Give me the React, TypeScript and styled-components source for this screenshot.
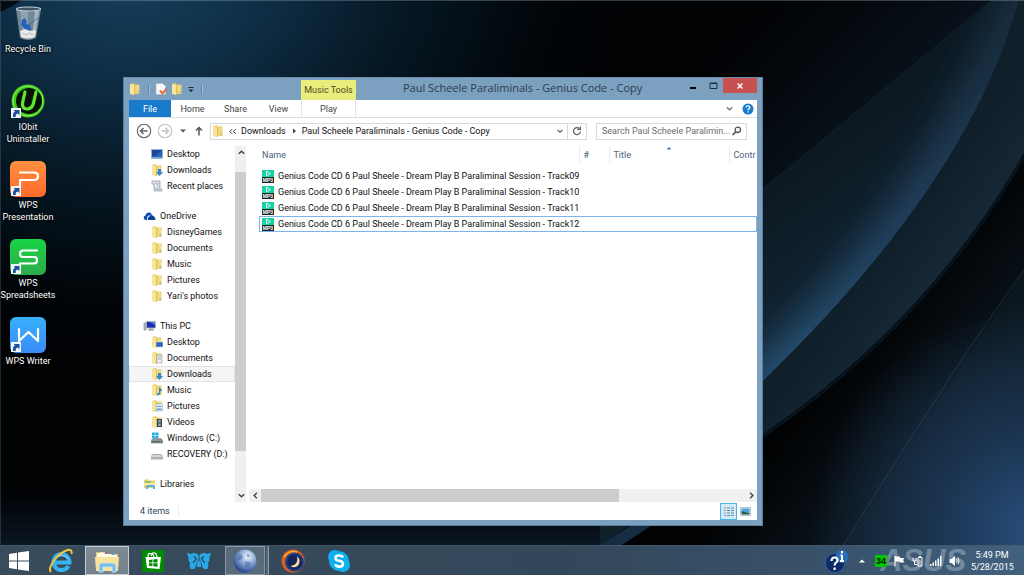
import React from "react";
import styled, { createGlobalStyle, css } from "styled-components";

const Global = createGlobalStyle`
  * { box-sizing: border-box; }
  body { margin: 0; background: #000; }
  body, button, input, table { font-family: Roboto, "Open Sans", sans-serif; font-size: 9px; line-height: 12px; }
  button { border: 0; padding: 0; background: none; color: inherit; cursor: pointer; }
  a { color: inherit; text-decoration: none; }
  svg { display: block; flex: none; }
  ul { list-style: none; margin: 0; padding: 0; }
`;

const Screen = styled.div`
  position: relative;
  min-height: 100vh;
  display: flex;
  flex-direction: column;
  overflow: hidden;
  background: #02060a;
`;
const WallpaperSvg = styled.svg`
  position: absolute;
  inset: 0;
  width: 100%;
  height: 100%;
`;
const Desktop = styled.main`
  position: relative;
  flex: 1;
  border-top: 1px solid rgba(170, 190, 200, 0.3);
  border-left: 1px solid rgba(170, 190, 200, 0.18);
`;

/* Desktop shortcuts */
const Shortcuts = styled.ul`
  width: 54px;
  padding-top: 4px;
`;
const Shortcut = styled.a`
  display: flex;
  flex-direction: column;
  align-items: center;
  gap: 2px;
  height: 78px;
  color: #fff;
  text-align: center;
  text-shadow: 0 1px 2px #000, 0 0 2px #000;
`;

/* Explorer window */
const Window = styled.section`
  position: absolute;
  top: 76px;
  left: 122px;
  right: 261px;
  bottom: 19px;
  display: flex;
  flex-direction: column;
  padding: 0 5px 5px;
  background: #7ba0c0;
  border: 1px solid #5c7d99;
  border-top-color: #6b8cab;
`;
const TitleBar = styled.header`
  display: flex;
  height: 22px;
  flex: none;
`;
const QuickAccess = styled.div`
  display: flex;
  align-items: center;
  gap: 4px;
  width: 172px;
`;
const QuickSeparator = styled.span<{ $last?: boolean }>`
  width: 1px;
  height: 9px;
  margin-left: ${(p) => (p.$last ? 2 : 3)}px;
  margin-right: 2px;
  background: #5f83a3;
  box-shadow: 1px 0 #a3bdd3;
`;
const ContextTab = styled.div`
  width: 55px;
  margin-top: 2px;
  line-height: 20px;
  text-align: center;
  background: #e9ed7b;
  color: #4b4b23;
`;
const Title = styled.h1`
  flex: 1;
  margin: 0;
  padding-left: 47px;
  font-family: "Open Sans", sans-serif;
  font-size: 11px;
  line-height: 20px;
  font-weight: 400;
  color: #2c3e50;
  white-space: nowrap;
  overflow: hidden;
`;
const WindowButton = styled.button<{ $close?: boolean }>`
  width: ${(p) => (p.$close ? 34 : 20)}px;
  height: 15px;
  display: flex;
  align-items: center;
  justify-content: center;
  ${(p) => p.$close && css`background: #c75050; color: #fff;`}
`;
const Client = styled.div`
  flex: 1;
  min-height: 0;
  display: flex;
  flex-direction: column;
  background: #fff;
  color: #111;
`;
const Ribbon = styled.nav`
  display: flex;
  height: 18px;
  flex: none;
  border-bottom: 1px solid #dcdddf;
  color: #444;
`;
const RibbonTab = styled.button<{ $file?: boolean; $context?: boolean }>`
  width: 43px;
  line-height: 18px;
  text-align: center;
  ${(p) => p.$file && css`width: 42px; background: #1979ca; color: #fff;`}
  ${(p) =>
    p.$context &&
    css`
      width: 55px;
      margin-left: 1px;
      border: solid #e4e5e6;
      border-width: 0 1px;
    `}
`;
const RibbonEnd = styled.div`
  margin-left: auto;
  display: flex;
  align-items: center;
  gap: 8px;
  padding-right: 3px;
  color: #777;
`;
const AddressRow = styled.div`
  display: flex;
  align-items: center;
  height: 28px;
  flex: none;
  padding: 0 10px 2px 7px;
`;
const NavButton = styled.button<{ $w: number }>`
  width: ${(p) => p.$w}px;
  height: 16px;
  display: flex;
  align-items: center;
  justify-content: center;
  color: #555;
`;
const Box = styled.div`
  display: flex;
  align-items: center;
  height: 17px;
  border: 1px solid #d9d9d9;
  background: #fff;
`;
const AddressBox = styled(Box)`
  flex: 1;
  padding-left: 1px;
  gap: 4px;
  white-space: nowrap;
  min-width: 0;
`;
const AddressEnd = styled.div`
  margin-left: auto;
  display: flex;
  align-self: stretch;
`;
const BoxButton = styled.button<{ $divided?: boolean }>`
  width: ${(p) => (p.$divided ? 19 : 14)}px;
  display: flex;
  align-items: center;
  justify-content: center;
  color: #555;
  ${(p) => p.$divided && css`border-left: 1px solid #d9d9d9;`}
`;
const SearchBox = styled(Box)`
  width: 151px;
  margin-left: 9px;
  padding: 0 4px 0 5px;
`;
const SearchInput = styled.input`
  flex: 1;
  min-width: 0;
  border: 0;
  padding: 0;
  outline: 0;
  background: none;
  color: #6d6d6d;
  text-overflow: ellipsis;
  &::placeholder { color: #6d6d6d; opacity: 1; }
`;
const Panes = styled.div`
  flex: 1;
  min-height: 0;
  display: flex;
`;
const NavPane = styled.nav`
  width: 106px;
  overflow: hidden;
  display: flex;
  flex-direction: column;
  gap: 14px;
`;
const NavItem = styled.a<{ $root?: boolean; $selected?: boolean }>`
  display: flex;
  align-items: center;
  gap: 4px;
  height: 16px;
  padding-left: ${(p) => (p.$root ? 14 : 22)}px;
  white-space: nowrap;
  ${(p) => p.$selected && css`background: #f5f5f5; box-shadow: inset 0 0 0 1px #e3e3e3;`}
`;
const VScroll = styled.div`
  width: 11px;
  display: flex;
  flex-direction: column;
  background: #f0f0f0;
`;
const HScroll = styled.div`
  height: 13px;
  flex: none;
  display: flex;
  margin-left: 3px;
  background: #f0f0f0;
`;
const ScrollArrow = styled.button`
  width: 12px;
  height: 13px;
  flex: none;
  display: flex;
  align-items: center;
  justify-content: center;
  color: #444;
`;
const VThumb = styled.div`
  margin-top: 13px;
  flex: 0 1 279px;
  background: #cdcdcd;
`;
const VSpace = styled.div`
  flex: 1;
`;
const HThumb = styled.div`
  width: 74%;
  background: #cdcdcd;
`;
const HTrack = styled.div`
  flex: 1;
  display: flex;
`;
const FilePane = styled.div`
  flex: 1;
  min-width: 0;
  display: flex;
  flex-direction: column;
`;
const FileArea = styled.div`
  flex: 1;
  overflow: hidden;
  padding-left: 13px;
`;
const FileTable = styled.table`
  width: 100%;
  table-layout: fixed;
  border-collapse: collapse;
  white-space: nowrap;
`;
const HeadCell = styled.th<{ $w?: number }>`
  ${(p) => p.$w && css`width: ${p.$w}px;`}
  position: relative;
  height: 18px;
  padding: 0 0 0 4px;
  text-align: left;
  font-weight: 400;
  color: #4c607a;
  overflow: hidden;
  & + & { border-left: 1px solid #e4edf5; }
  &:first-child { padding-left: 3px; }
`;
const SortMark = styled.svg`
  position: absolute;
  top: 0;
  left: 56px;
`;
const HeadGap = styled.tr`
  height: 4px;
`;
const FileRow = styled.tr<{ $focused?: boolean }>`
  height: 16px;
  ${(p) => p.$focused && css`outline: 1px solid #7eb4ea; outline-offset: -1px;`}
`;
const FileCell = styled.td`
  padding: 0 0 0 3px;
`;
const FileName = styled.span`
  display: flex;
  align-items: center;
  gap: 4px;
`;
const Status = styled.footer`
  height: 18px;
  flex: none;
  display: flex;
  align-items: center;
  padding: 0 3px 0 11px;
  color: #2c3f5c;
`;
const StatusText = styled.span`
  padding-right: 8px;
  border-right: 1px solid #ececec;
`;
const StatusEnd = styled.div`
  margin-left: auto;
  display: flex;
`;
const ViewButton = styled.button<{ $on?: boolean }>`
  width: 17px;
  height: 17px;
  display: flex;
  align-items: center;
  justify-content: center;
  ${(p) => p.$on && css`background: #cfeaf8; box-shadow: inset 0 0 0 1px #4db5e6;`}
`;

/* Taskbar */
const Taskbar = styled.footer`
  position: relative;
  display: flex;
  align-items: stretch;
  height: 30px;
  padding: 0 11px 0 0;
  color: #fff;
  background: linear-gradient(90deg, #384c5c, #33475a 55%, #38516a 80%, #41617f);
  border-top: 1px solid #45586a;
`;
const TaskButton = styled.button<{ $start?: boolean; $active?: boolean; $open?: boolean }>`
  width: ${(p) => (p.$start ? 38 : p.$open ? 40 : 44)}px;
  margin-right: ${(p) => (p.$start || p.$open ? 1 : 2)}px;
  display: flex;
  align-items: center;
  justify-content: center;
  ${(p) => p.$active && css`background: linear-gradient(#7f8b95, #74818c); box-shadow: inset 0 0 0 1px #c4ccd2;`}
  ${(p) => p.$open && css`margin-left: 2px; background: #586b7b; box-shadow: inset 0 0 0 1px #8c99a4;`}
`;
const StackedEdge = styled.span`
  width: 3px;
  margin-right: 2px;
  background: #586b7b;
  border-right: 1px solid #8c99a4;
`;
const Tray = styled.div`
  position: relative;
  margin-left: auto;
  display: flex;
  align-items: center;
  gap: 7px;
`;
const Brand = styled.span`
  position: absolute;
  left: 55px;
  top: 3px;
  font: italic 700 31px/24px "Liberation Sans", sans-serif;
  color: rgba(200, 212, 222, 0.4);
`;
const TrayButton = styled.button`
  position: relative;
  display: flex;
`;
const TempBadge = styled.span`
  position: relative;
  width: 12px;
  background: #00c800;
  color: #001a00;
  font-family: "Liberation Sans", sans-serif;
  font-weight: 700;
  text-align: center;
`;
const Clock = styled.time`
  width: 42px;
  margin-left: 4px;
  line-height: 12px;
  text-align: center;
  white-space: nowrap;
`;

/* ---------- Drawings ---------- */
const Wallpaper = () => (
  <WallpaperSvg viewBox="0 0 1024 575" preserveAspectRatio="none" aria-hidden="true">
    <defs>
      <radialGradient id="wl" gradientUnits="userSpaceOnUse" cx="130" cy="-50" r="500" gradientTransform="scale(1 .8)">
        <stop offset="0" stopColor="#194361" />
        <stop offset=".3" stopColor="#0e2d44" />
        <stop offset=".55" stopColor="#061825" />
        <stop offset=".85" stopColor="#010508" />
        <stop offset="1" stopColor="#010204" />
      </radialGradient>
      <linearGradient id="wm" x1="760" y1="60" x2="900" y2="260" gradientUnits="userSpaceOnUse">
        <stop offset="0" stopColor="#08111a" />
        <stop offset=".5" stopColor="#0d1a23" />
        <stop offset="1" stopColor="#122433" />
      </linearGradient>
      <linearGradient id="wb" x1="820" y1="340" x2="880" y2="385" gradientUnits="userSpaceOnUse">
        <stop offset="0" stopColor="#10202b" />
        <stop offset="1" stopColor="#182b3a" />
      </linearGradient>
      <linearGradient id="wd" x1="850" y1="350" x2="960" y2="440" gradientUnits="userSpaceOnUse">
        <stop offset="0" stopColor="#010203" />
        <stop offset="1" stopColor="#0d1922" />
      </linearGradient>
      <linearGradient id="wt" x1="770" y1="0" x2="880" y2="110" gradientUnits="userSpaceOnUse">
        <stop offset="0" stopColor="#010204" />
        <stop offset="1" stopColor="#08111a" />
      </linearGradient>
      <linearGradient id="wk" x1="1010" y1="20" x2="780" y2="370" gradientUnits="userSpaceOnUse">
        <stop offset="0" stopColor="#22405a" stopOpacity=".7" />
        <stop offset=".45" stopColor="#26496c" />
        <stop offset="1" stopColor="#2d618a" />
      </linearGradient>
      <radialGradient id="wr" gradientUnits="userSpaceOnUse" cx="1040" cy="535" r="230">
        <stop offset="0" stopColor="#2a5080" />
        <stop offset=".45" stopColor="#1b3450" />
        <stop offset="1" stopColor="#1b3450" stopOpacity="0" />
      </radialGradient>
      <linearGradient id="ws" x1="0" y1="490" x2="0" y2="545" gradientUnits="userSpaceOnUse">
        <stop offset="0" stopColor="#0a1622" stopOpacity="0" />
        <stop offset="1" stopColor="#0a1622" />
      </linearGradient>
      <filter id="wg" x="-30%" y="-30%" width="160%" height="160%">
        <feGaussianBlur stdDeviation="20" />
      </filter>
      <clipPath id="wc">
        <path d="M992 0 L762 190 L600 330 V545 L762 382 Q971 180 1019 0 Z" />
      </clipPath>
    </defs>
    <rect width="1024" height="575" fill="url(#wl)" />
    <path d="M0 0 H22 Q10 8 0 12 Z" fill="#030b13" />
    <rect y="490" width="700" height="85" fill="url(#ws)" />
    <path d="M660 0 H992 L762 190 L640 300 Z" fill="url(#wt)" />
    <path d="M992 0 L762 190 L600 330 V545 L762 382 Q971 180 1019 0 Z" fill="url(#wm)" />
    <g clipPath="url(#wc)">
      <path d="M1028 -30 Q975 185 766 386 L640 500" fill="none" stroke="url(#wk)" strokeWidth="36" filter="url(#wg)" />
    </g>
    <path d="M992 0 L762 190" stroke="#1f3038" strokeWidth="1" opacity=".5" />
    <path d="M1019 0 H1024 V153 Q930 320 762 435 L600 545 V530 L762 382 Q971 180 1019 0 Z" fill="url(#wb)" />
    <path d="M1024 153 V575 H560 L762 435 Q930 320 1024 153 Z" fill="url(#wd)" />
    <path d="M600 545 L640 520 H660 L622 545 Z" fill="#142d43" />
    <path d="M1024 156 Q930 323 762 437" fill="none" stroke="#07131d" strokeWidth="3" />
    <path d="M1024 270 L825 575 H1024 Z" fill="#12222d" opacity=".35" />
    <path d="M700 250 H1024 V575 H700 Z" fill="url(#wr)" />
    <path d="M1024 270 Q950 372 825 575" fill="none" stroke="#3b5363" strokeWidth="1" opacity=".45" />
  </WallpaperSvg>
);

const ShortcutArrow = () => (
  <g>
    <rect x="1" y="25" width="10" height="10" fill="#f2f5f8" />
    <path d="M3 34 Q2.500 29.500 5 28.800 L3.800 27 H9.500 V32 L7.600 30.600 Q5.200 31.500 5.800 34 Z" fill="#1d4f9c" />
  </g>
);
const BinIcon = () => (
  <svg width="36" height="36" viewBox="0 0 36 36">
    <path d="M6 4 L10 33 Q18 37 26 33 L31 4 Z" fill="#8fa3b2" opacity=".75" />
    <path d="M10 6 L13 31 H18 V6 Z" fill="#c9d6de" opacity=".35" />
    <path d="M25 6 L22 31 L25 32 L29 6 Z" fill="#dbe5eb" opacity=".5" />
    <ellipse cx="18.500" cy="4" rx="12.500" ry="2" fill="#3d5566" stroke="#c8d2d9" strokeWidth="1" />
    <path d="M12 15 L15 13 L17 17 L16 19 L20 20 L21 25 L16 26 L13 22 L11 20 Z" fill="#2461c0" />
    <path d="M19 20 L28 13" stroke="#5a7184" strokeWidth="1" />
    <path d="M10 26 L15 24 L20 26 L26 25 L25 32 Q18 35 11 32 Z" fill="#e8e8e6" />
    <path d="M13 28 l3 2 l4 -2 l3 2" stroke="#b8b8b4" fill="none" strokeWidth="1" />
  </svg>
);
const IobitIcon = () => (
  <svg width="36" height="36" viewBox="0 0 36 36">
    <circle cx="18" cy="18" r="16.500" fill="#3ec81e" />
    <circle cx="18" cy="18" r="15" fill="none" stroke="#8df25a" strokeWidth="1" />
    <circle cx="19" cy="18" r="13" fill="#071207" />
    <path d="M15 9 L12.500 20 Q12 26 17 26 Q22 26 23.500 20 L26 9" fill="none" stroke="#62e636" strokeWidth="3.200" strokeLinecap="round" />
    <ShortcutArrow />
  </svg>
);
const WpsIcon = ({ id, from, to, d }: { id: string; from: string; to: string; d: string }) => (
  <svg width="36" height="36" viewBox="0 0 36 36">
    <defs>
      <linearGradient id={id} x1="0" y1="0" x2="0" y2="1">
        <stop offset="0" stopColor={from} />
        <stop offset="1" stopColor={to} />
      </linearGradient>
    </defs>
    <rect width="36" height="36" rx="6" fill={`url(#${id})`} />
    <path d={d} fill="none" stroke="#fff" strokeWidth="2.200" strokeLinecap="round" strokeLinejoin="round" />
    <ShortcutArrow />
  </svg>
);

const Folder = ({ children }: { children?: React.ReactNode }) => (
  <svg width="12" height="12" viewBox="0 0 12 12">
    <path d="M1 1 L5 0 L5.500 1.500 H10.500 V11 H1 Z" fill="#e8cb68" />
    <path d="M1 1 L5 2 V12 L1 11 Z" fill="#f9e59a" />
    <path d="M5 2 H5.800 V12 L5 12 Z" fill="#dcbc58" />
    <path d="M6.500 2.500 H10 V10.500 H6.500 Z" fill="#f1da84" />
    <path d="M8.500 8 h1.500 v2 h-1.500 z" fill="#a9c3a8" />
    {children}
  </svg>
);
const DownArrowMark = () => <path d="M7 5 H10 V8 H12 L8.500 12 L5 8 H7 Z" fill="#2f87d6" />;
const Monitor = () => (
  <svg width="12" height="12" viewBox="0 0 12 12">
    <rect x="0.500" y="1.500" width="11" height="9" fill="#2a62b8" stroke="#8fb2d8" strokeWidth=".6" />
    <path d="M1 2 H11 L4 8 H1 Z" fill="#1c459c" />
    <path d="M1 9 H11 V10 H1 Z" fill="#74a6dd" />
  </svg>
);
const Recent = () => (
  <svg width="12" height="12" viewBox="0 0 12 12">
    <path d="M1 1 H9 V9 H11 V11 H3 V4 H1 Z" fill="#dfe5e9" stroke="#9aa5ac" strokeWidth=".8" />
    <circle cx="6" cy="5.500" r="2.600" fill="#fff" stroke="#8da3b5" strokeWidth=".8" />
    <path d="M6 4 V5.500 H7.500" stroke="#5a7390" strokeWidth=".7" fill="none" />
    <path d="M4 9.700 H9" stroke="#9aa5ac" strokeWidth=".8" />
  </svg>
);
const Cloud = () => (
  <svg width="13" height="12" viewBox="0 0 13 12">
    <path d="M1 8.500 Q0 6 2.500 5.500 Q3 2.500 6 2.500 Q8 2.500 9 4.500 L5 6 Q3.500 7 4 10 H2.500 Q1.500 10 1 8.500 Z" fill="#0f4fae" />
    <path d="M5 10 Q4 7 6.500 6.500 Q8 4 10 5.800 Q11.500 6 11.500 7.500 Q13 8 12.500 9.300 Q12 10 11 10 Z" fill="#0a3f98" />
  </svg>
);
const Computer = () => (
  <svg width="13" height="12" viewBox="0 0 13 12">
    <path d="M1 3 H3 V10 H1 Z" fill="#b8c0c6" stroke="#6f7c86" strokeWidth=".6" />
    <rect x="3.500" y="1.500" width="9" height="6.500" fill="#1b2fae" stroke="#a9b8c4" strokeWidth=".8" />
    <path d="M7 2 H12 V5 Z" fill="#5c79dd" />
    <path d="M6 8.500 H10 V9.500 H11 V10.500 H5 V9.500 H6 Z" fill="#8e9ba5" />
  </svg>
);
const Drive = ({ win }: { win?: boolean }) => (
  <svg width="12" height="12" viewBox="0 0 12 12">
    {win && <path d="M1 0.500 H3.800 V3 H1 Z M4.300 0.500 H7.500 V3 H4.300 Z M1 3.500 H3.800 V6 H1 Z M4.300 3.500 H7.500 V6 H4.300 Z" fill="#1fb0e6" />}
    <path d="M2 6.500 H10 L12 8.500 V11 H0 V8.500 Z" fill={win ? "#8b949b" : "#d4d7da"} stroke="#767d83" strokeWidth=".6" />
    <path d="M1 9 H11 V10.500 H1 Z" fill={win ? "#5d666d" : "#a9adb0"} />
    <path d="M8.500 9.300 h1.800 v.8 h-1.800 z" fill="#5fd25f" />
  </svg>
);
const Library = () => (
  <svg width="13" height="12" viewBox="0 0 13 12">
    <path d="M1 2 L5 1 L6 2.500 H12 V10 H1 Z" fill="#edcf6b" />
    <path d="M2 3 H8 V5 H2 Z" fill="#8cc878" />
    <path d="M1 5 H12 V7 H1 Z" fill="#fbeaa6" />
    <path d="M3 11 V8.500 Q3 7 5 7 H10 Q12 7 12 8.500 V11 H10 V9 H5 V11 Z" fill="#58aee0" />
  </svg>
);
const Mp3 = () => (
  <svg width="12" height="13" viewBox="0 0 12 13">
    <rect width="12" height="7" fill="#19cfa4" />
    <path d="M4.500 1.200 L8.500 3.500 L4.500 6 Z" fill="none" stroke="#d8fff4" strokeWidth="1" />
    <rect y="7" width="12" height="6" fill="#1d2422" />
    <text x="6" y="12" fontSize="5" fontWeight="700" textAnchor="middle" fill="#fff" fontFamily="Liberation Sans, sans-serif">MP3</text>
  </svg>
);
const Stroke = ({ d, w = 10, s = 1.5 }: { d: string; w?: number; s?: number }) => (
  <svg width={w} height={w} viewBox="0 0 10 10" fill="none" stroke="currentColor" strokeWidth={s}>
    <path d={d} />
  </svg>
);
const CircleArrow = ({ flip, color }: { flip?: boolean; color: string }) => (
  <svg width="16" height="16" viewBox="0 0 16 16" fill="none" stroke={color}>
    <circle cx="8" cy="8" r="6.700" strokeWidth="1.100" />
    <path d={flip ? "M4.500 8 H11.500 M8.500 5 L11.500 8 L8.500 11" : "M11.500 8 H4.500 M7.500 5 L4.500 8 L7.500 11"} strokeWidth="1.500" />
  </svg>
);

const quickAccess = [{ name: "Properties" }, { name: "New folder" }];

const navGroups = [
  [
    { label: "Desktop", icon: <Monitor /> },
    { label: "Downloads", icon: <Folder><DownArrowMark /></Folder> },
    { label: "Recent places", icon: <Recent /> },
  ],
  [
    { label: "OneDrive", icon: <Cloud />, root: true },
    ...["DisneyGames", "Documents", "Music", "Pictures", "Yari's photos"].map((label) => ({ label, icon: <Folder /> })),
  ],
  [
    { label: "This PC", icon: <Computer />, root: true },
    { label: "Desktop", icon: <Folder><path d="M5 6 H12 V11 H5 Z" fill="#2d66c0" stroke="#cfdcec" strokeWidth=".5" /></Folder> },
    { label: "Documents", icon: <Folder><path d="M6 3 H11 V11 H6 Z" fill="#eef1f4" stroke="#8d99a5" strokeWidth=".6" /><path d="M7 5 H10 M7 7 H10" stroke="#7f93ab" strokeWidth=".7" /></Folder> },
    { label: "Downloads", icon: <Folder><DownArrowMark /></Folder>, selected: true },
    { label: "Music", icon: <Folder><path d="M8 3 L11 6 L10 8 L9 6.500 V10 Q8 12 6 11 Q5.500 9 8 9 Z" fill="#2987d4" /></Folder> },
    { label: "Pictures", icon: <Folder><path d="M5 4 H11.500 V11 H5 Z" fill="#eaf4fa" stroke="#8ea4b2" strokeWidth=".6" /><path d="M6 6 H10.500 V7 H6 Z M6 8.500 H10.500 V10 H6 Z" fill="#4f9ec4" /></Folder> },
    { label: "Videos", icon: <Folder><path d="M6 3 H11 V11 H6 Z" fill="#3c4348" /><path d="M7.300 4 H9.700 V6.500 H7.300 Z M7.300 7.500 H9.700 V10 H7.300 Z" fill="#7db2cf" /></Folder> },
    { label: "Windows (C:)", icon: <Drive win /> },
    { label: "RECOVERY (D:)", icon: <Drive /> },
  ],
  [{ label: "Libraries", icon: <Library />, root: true }],
] as { label: string; icon: React.ReactNode; root?: boolean; selected?: boolean }[][];

const tracks = ["09", "10", "11", "12"];

const shortcuts = [
  { label: "Recycle Bin", icon: <BinIcon /> },
  { label: "IObit Uninstaller", icon: <IobitIcon /> },
  { label: "WPS Presentation", icon: <WpsIcon id="wp" from="#ff9040" to="#ff6a2c" d="M10 11.500 H24 Q28 11.500 28 15.300 Q28 19 24 19 H10 V27" /> },
  { label: "WPS Spreadsheets", icon: <WpsIcon id="wsh" from="#19d443" to="#2cab4c" d="M27 11.500 H13 Q10 11.500 10 15 Q10 18 13 18 H24 Q27 18 27 21 Q27 24.500 24 24.500 H10" /> },
  { label: "WPS Writer", icon: <WpsIcon id="ww" from="#36b0fb" to="#3b8cf6" d="M9 12 V24 L18.500 15 L28 24 V12" /> },
];

export default function App() {
  return (
    <>
      <Global />
      <Screen>
        <Wallpaper />
        <Desktop>
          <Shortcuts>
            {shortcuts.map((s) => (
              <li key={s.label}>
                <Shortcut href="#">
                  {s.icon}
                  {s.label}
                </Shortcut>
              </li>
            ))}
          </Shortcuts>

          <Window>
            <TitleBar>
              <QuickAccess>
                <Folder />
                <QuickSeparator />
                {quickAccess.map((q, i) => (
                  <button key={q.name} aria-label={q.name}>
                    {i === 0 ? (
                      <svg width="12" height="12" viewBox="0 0 12 12">
                        <path d="M1 0.500 H7.500 L10.500 3 V11.500 H1 Z" fill="#f7f9fb" stroke="#a4b3c0" strokeWidth=".6" />
                        <path d="M5 7.500 L7.500 10.500 L11.500 5.500" fill="none" stroke="#e2693c" strokeWidth="2" />
                      </svg>
                    ) : (
                      <Folder />
                    )}
                  </button>
                ))}
                <button aria-label="Customize Quick Access Toolbar">
                  <svg width="8" height="8" viewBox="0 0 8 8" fill="#1d2a36">
                    <path d="M1.500 2 H6.500 V3 H1.500 Z M1.500 4.500 H6.500 L4 7 Z" />
                  </svg>
                </button>
                <QuickSeparator $last />
              </QuickAccess>
              <ContextTab>Music Tools</ContextTab>
              <Title>Paul Scheele Paraliminals - Genius Code - Copy</Title>
              <WindowButton aria-label="Minimize">
                <Stroke d="M2 7 H8" s={2} />
              </WindowButton>
              <WindowButton aria-label="Maximize">
                <svg width="9" height="9" viewBox="0 0 9 9" fill="none" stroke="#22303c">
                  <path d="M1 2 H8 V7.500 H1 Z M1 2.500 H8" />
                </svg>
              </WindowButton>
              <WindowButton $close aria-label="Close">
                <Stroke d="M2 2 L8 8 M8 2 L2 8" w={8} s={1.8} />
              </WindowButton>
            </TitleBar>

            <Client>
              <Ribbon>
                <RibbonTab $file>File</RibbonTab>
                <RibbonTab>Home</RibbonTab>
                <RibbonTab>Share</RibbonTab>
                <RibbonTab>View</RibbonTab>
                <RibbonTab $context>Play</RibbonTab>
                <RibbonEnd>
                  <button aria-label="Expand the Ribbon">
                    <Stroke d="M2 3.500 L5 6.500 L8 3.500" w={9} />
                  </button>
                  <button aria-label="Help">
                    <svg width="12" height="12" viewBox="0 0 12 12">
                      <circle cx="6" cy="6" r="5.500" fill="#1979ca" />
                      <path d="M4 4.500 Q4.200 2.800 6 2.800 Q7.900 2.800 7.900 4.400 Q7.900 5.300 6.800 5.900 Q6 6.400 6 7.300 M6 8.300 V9.600" fill="none" stroke="#fff" strokeWidth="1.300" />
                    </svg>
                  </button>
                </RibbonEnd>
              </Ribbon>

              <AddressRow>
                <NavButton $w={16} aria-label="Back"><CircleArrow color="#666" /></NavButton>
                <NavButton $w={26} aria-label="Forward"><CircleArrow flip color="#c2c2c2" /></NavButton>
                <NavButton $w={10} aria-label="Recent locations">
                  <svg width="6" height="4" viewBox="0 0 6 4" fill="#555"><path d="M0 0.500 H6 L3 3.500 Z" /></svg>
                </NavButton>
                <NavButton $w={22} aria-label="Up"><Stroke d="M5 9.500 V1.500 M2 4.500 L5 1.500 L8 4.500" /></NavButton>
                <AddressBox>
                  <Folder />
                  <Stroke d="M4.500 2.500 L2 5 L4.500 7.500 M8.500 2.500 L6 5 L8.500 7.500" w={9} s={1} />
                  <a href="#">Downloads</a>
                  <svg width="8" height="6" viewBox="0 0 8 6" fill="#444"><path d="M3 0.500 L6 3 L3 5.500 Z" /></svg>
                  <a href="#">Paul Scheele Paraliminals - Genius Code - Copy</a>
                  <AddressEnd>
                    <BoxButton aria-label="Previous locations"><Stroke d="M2 3.500 L5 6.500 L8 3.500" w={8} /></BoxButton>
                    <BoxButton $divided aria-label="Refresh">
                      <svg width="10" height="10" viewBox="0 0 10 10" fill="none" stroke="#666" strokeWidth="1.300">
                        <path d="M7.500 2.600 A3.500 3.500 0 1 0 8.500 5.500" />
                        <path d="M5.200 3.400 H8.300 V0.500" />
                      </svg>
                    </BoxButton>
                  </AddressEnd>
                </AddressBox>
                <SearchBox>
                  <SearchInput aria-label="Search" placeholder="Search Paul Scheele Paralimin..." />
                  <svg width="11" height="10" viewBox="0 0 11 10" fill="none" stroke="#555" strokeWidth="1.300">
                    <circle cx="6.800" cy="3.800" r="2.700" />
                    <path d="M4.800 5.800 L1.500 9" strokeWidth="1.700" />
                  </svg>
                </SearchBox>
              </AddressRow>

              <Panes>
                <NavPane>
                  {navGroups.map((group, i) => (
                    <ul key={i}>
                      {group.map((n) => (
                        <li key={n.label}>
                          <NavItem href="#" $root={n.root} $selected={n.selected}>
                            {n.icon}
                            {n.label}
                          </NavItem>
                        </li>
                      ))}
                    </ul>
                  ))}
                </NavPane>
                <VScroll>
                  <ScrollArrow aria-label="Scroll up"><Stroke d="M2 6.500 L5 3.500 L8 6.500" w={9} s={1.6} /></ScrollArrow>
                  <VThumb />
                  <VSpace />
                  <ScrollArrow aria-label="Scroll down"><Stroke d="M2 3.500 L5 6.500 L8 3.500" w={9} s={1.6} /></ScrollArrow>
                </VScroll>
                <FilePane>
                  <FileArea>
                    <FileTable>
                      <thead>
                        <tr>
                          <HeadCell $w={320}>Name</HeadCell>
                          <HeadCell $w={30}>#</HeadCell>
                          <HeadCell $w={120}>
                            Title
                            <SortMark width="6" height="4" viewBox="0 0 6 4" fill="#4a80a8"><path d="M0.500 3.500 L3 1 L5.500 3.500 Z" /></SortMark>
                          </HeadCell>
                          <HeadCell>Contr</HeadCell>
                        </tr>
                      </thead>
                      <tbody>
                        <HeadGap aria-hidden="true" />
                        {tracks.map((t) => (
                          <FileRow key={t} $focused={t === "12"}>
                            <FileCell>
                              <FileName>
                                <Mp3 />
                                Genius Code CD 6 Paul Sheele - Dream Play B Paraliminal Session - Track{t}
                              </FileName>
                            </FileCell>
                            <FileCell />
                            <FileCell />
                            <FileCell />
                          </FileRow>
                        ))}
                      </tbody>
                    </FileTable>
                  </FileArea>
                  <HScroll>
                    <ScrollArrow aria-label="Scroll left"><Stroke d="M6.500 2 L3.500 5 L6.500 8" w={9} s={1.6} /></ScrollArrow>
                    <HTrack><HThumb /></HTrack>
                    <ScrollArrow aria-label="Scroll right"><Stroke d="M3.500 2 L6.500 5 L3.500 8" w={9} s={1.6} /></ScrollArrow>
                  </HScroll>
                </FilePane>
              </Panes>

              <Status>
                <StatusText>4 items</StatusText>
                <StatusEnd>
                  <ViewButton $on aria-label="Details view">
                    <svg width="12" height="11" viewBox="0 0 12 11" fill="none" stroke="#5d7f95">
                      <path d="M4 2 H7 M8 2 H11 M4 4.500 H7 M8 4.500 H11 M4 7 H7 M8 7 H11 M4 9.500 H7 M8 9.500 H11" strokeWidth=".9" />
                      <path d="M1 2 H3 M1 4.500 H3 M1 7 H3 M1 9.500 H3" stroke="#b98a8a" />
                    </svg>
                  </ViewButton>
                  <ViewButton aria-label="Thumbnail view">
                    <svg width="11" height="9" viewBox="0 0 11 9">
                      <rect x=".5" y=".5" width="10" height="8" fill="#eaf4fb" stroke="#b4c0c9" />
                      <path d="M1.500 1.500 H9.500 V5 H1.500 Z" fill="#4aa3dc" />
                      <path d="M1.500 7.500 V4 L4 5 L9.500 5.500 V7.500 Z" fill="#1e5a50" />
                    </svg>
                  </ViewButton>
                </StatusEnd>
              </Status>
            </Client>
          </Window>
        </Desktop>

        <Taskbar>
          <TaskButton $start aria-label="Start">
            <svg width="22" height="20" viewBox="0 0 22 20" fill="#fff">
              <path d="M1 3 L9 1.800 V9.500 H1 Z M10 1.600 L21 0 V9.500 H10 Z M1 10.500 H9 V18.200 L1 17 Z M10 10.500 H21 V20 L10 18.400 Z" />
            </svg>
          </TaskButton>
          <TaskButton aria-label="Internet Explorer">
            <svg width="26" height="26" viewBox="0 0 26 26" fill="none">
              <path d="M20.500 18 A8 8 0 1 1 21.500 14.500 H7" stroke="#35b4ee" strokeWidth="4" />
              <path d="M7 10.500 Q13 5 20 10" stroke="#9adff8" strokeWidth="1" />
              <path d="M3 24 Q0 21 6 12.500 Q12 4.500 19.500 2 Q24.500 1 23.500 6" stroke="#f5c43a" strokeWidth="2" />
            </svg>
          </TaskButton>
          <TaskButton $active aria-label="File Explorer">
            <svg width="26" height="24" viewBox="0 0 26 24">
              <path d="M2 3 H9 L10 5 H24 V21 H2 Z" fill="#e9c968" />
              <path d="M4 2 H6 V4 H4 Z" fill="#49b04d" />
              <path d="M10 3 H12 V5 H10 Z" fill="#d8563e" />
              <path d="M18 4 H20 V6 H18 Z" fill="#5299dd" />
              <path d="M5 3.500 H11 V5 H17 V6 H23 V8 H3 V5 Z" fill="#fffbe9" />
              <path d="M1 8 H25 L24 22 H2 Z" fill="#f8e39a" />
              <path d="M5 23 V17 Q5 14 8 14 H18 Q22 14 22 17 V23 H18 V18 H9 V23 Z" fill="#78bde8" stroke="#c9e6f7" strokeWidth=".8" />
            </svg>
          </TaskButton>
          <TaskButton aria-label="Store">
            <svg width="22" height="22" viewBox="0 0 22 22">
              <rect width="22" height="22" fill="#008a00" />
              <path d="M3.500 7 H19 L17.500 19 L5 18 Z" fill="#fff" />
              <path d="M6 8 Q5.500 3 8.500 3.500 Q12 4 12 8 M9 6 Q10 2 13 3 Q15 4 15 8" fill="none" stroke="#fff" strokeWidth="1.200" />
              <path d="M7 10 L10.500 9.600 V12.500 H7 Z M11.300 9.500 L15.500 9 V12.500 H11.300 Z M7 13.300 H10.500 V16.200 L7 15.800 Z M11.300 13.300 H15.500 V16.800 L11.300 16.300 Z" fill="#008a00" />
            </svg>
          </TaskButton>
          <TaskButton aria-label="Twin bears">
            <svg width="26" height="20" viewBox="0 0 26 20" fill="#27a9e8">
              <path d="M1 3 Q2 1 4 3 L8 2 Q11 2 12.500 4 V8 L10 13 Q10 17 8 18 H4.500 Q3 15 4 12 Q1.500 9 2.500 6 Z" />
              <path d="M25 3 Q24 1 22 3 L18 2 Q15 2 13.500 4 V8 L16 13 Q16 17 18 18 H21.500 Q23 15 22 12 Q24.500 9 23.500 6 Z" />
              <path d="M11 12 L13 9 L15 12 V16 H11 Z" />
              <path d="M8 5.500 L10.500 7.500 L7 12 M18 5.500 L15.500 7.500 L19 12" fill="none" stroke="#24394a" strokeWidth="1.100" />
            </svg>
          </TaskButton>
          <TaskButton $open aria-label="Moon browser">
            <svg width="24" height="24" viewBox="0 0 24 24">
              <defs>
                <radialGradient id="moon" cx=".62" cy=".3" r=".75">
                  <stop offset="0" stopColor="#f0f6fc" />
                  <stop offset=".45" stopColor="#8aa9d6" />
                  <stop offset="1" stopColor="#1c3c84" />
                </radialGradient>
              </defs>
              <circle cx="12" cy="12" r="11.500" fill="url(#moon)" />
              <path d="M5 6 Q9 4 10 8 Q8 12 4 11 Z M12 13 Q17 11 18 15 Q15 20 12 18 Z M14 5 Q17 5 17 8 L14 8 Z" fill="#49699f" opacity=".55" />
            </svg>
          </TaskButton>
          <StackedEdge />
          <TaskButton aria-label="Eclipse browser">
            <svg width="24" height="24" viewBox="0 0 24 24">
              <circle cx="12" cy="12" r="11.500" fill="#d9601a" />
              <path d="M3 8 Q8 1 16 3" fill="none" stroke="#ffae42" strokeWidth="1.500" />
              <circle cx="13.500" cy="13" r="9.500" fill="#1f3f86" />
              <circle cx="13.500" cy="13" r="7.500" fill="#12265a" />
              <path d="M16 7 Q21 12 16.500 17 Q13 19.500 9.500 17 Q18 16 16 7 Z" fill="#ffd9a0" />
            </svg>
          </TaskButton>
          <TaskButton aria-label="Skype">
            <svg width="24" height="24" viewBox="0 0 24 24">
              <circle cx="8" cy="8" r="7" fill="#0cb0ee" />
              <circle cx="16" cy="16" r="7" fill="#0cb0ee" />
              <circle cx="12" cy="12" r="10" fill="#0cb0ee" />
              <path d="M16 8.500 Q15 6.500 12 6.500 Q8.500 6.500 8.500 9 Q8.500 11.200 12 11.800 Q16 12.500 16 15 Q16 17.600 12 17.600 Q9 17.600 8 15.300" fill="none" stroke="#fff" strokeWidth="2.600" />
            </svg>
          </TaskButton>

          <Tray>
            <Brand>ASUS</Brand>
            <TrayButton aria-label="Help center">
              <svg width="24" height="24" viewBox="0 0 24 24">
                <circle cx="10" cy="14" r="9.500" fill="#0b2a66" stroke="#2c62a8" strokeWidth=".8" />
                <circle cx="17" cy="7.500" r="6.500" fill="#2a6cba" />
                <path d="M6.500 12 Q6.500 8.500 9.500 8.500 Q12.500 8.500 12.500 11.200 Q12.500 12.800 10.800 13.800 Q9.600 14.600 9.600 16.500 M9.600 18.500 V21" fill="none" stroke="#fff" strokeWidth="2.200" />
                <path d="M17 6 V12 M17 2 V4.500 M15.500 6.500 H17 M15 12 H19" stroke="#fff" strokeWidth="2" />
              </svg>
            </TrayButton>
            <TrayButton aria-label="Show hidden icons">
              <svg width="12" height="6" viewBox="0 0 12 6" fill="#fff"><path d="M3 4.500 L6 1.500 L9 4.500 Z" /></svg>
            </TrayButton>
            <TempBadge>34</TempBadge>
            <TrayButton aria-label="Action Center">
              <svg width="11" height="12" viewBox="0 0 11 12" fill="#fff"><path d="M0.500 1 H1.500 V11.500 H0.500 Z M1.500 1.500 H6 V3 H10.500 L9 5 L10.500 7.500 H5.500 V6.500 H1.500 Z" /></svg>
            </TrayButton>
            <TrayButton aria-label="Power">
              <svg width="11" height="12" viewBox="0 0 11 12" fill="none" stroke="#fff">
                <path d="M6 2.500 H10 V11 H6 Z M7 1.500 H9" />
                <path d="M1 3 V6 H4 V3 M2.500 6 V9.500 H5" />
                <path d="M8 4.500 V9.500" opacity=".7" />
              </svg>
            </TrayButton>
            <TrayButton aria-label="Network">
              <svg width="12" height="12" viewBox="0 0 12 12" fill="#fff"><path d="M0 9 H1.500 V11 H0 Z M2.500 7.500 H4 V11 H2.500 Z M5 5.500 H6.500 V11 H5 Z M7.500 3.500 H9 V11 H7.500 Z M10 1 H11.500 V11 H10 Z" /></svg>
            </TrayButton>
            <TrayButton aria-label="Volume">
              <svg width="11" height="12" viewBox="0 0 11 12"><path d="M0.500 4 H2.500 L6 1 V11 L2.500 8 H0.500 Z" fill="#fff" /><path d="M7.500 4 Q8.800 6 7.500 8 M9 2.500 Q11 6 9 9.500" fill="none" stroke="#fff" strokeWidth=".9" /></svg>
            </TrayButton>
            <Clock>
              5:49 PM
              <br />
              5/28/2015
            </Clock>
          </Tray>
        </Taskbar>
      </Screen>
    </>
  );
}
